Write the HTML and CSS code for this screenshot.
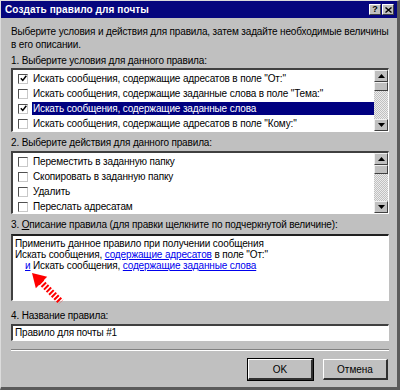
FILE: index.html
```html
<!DOCTYPE html>
<html lang="ru">
<head>
  <meta charset="UTF-8">
  <title>Создать правило для почты</title>
  <link rel="stylesheet" href="styles.css">
</head>
<body>
  <div class="window">
    <div class="titlebar">
      <span class="title">Создать правило для почты</span>
      <div class="title-buttons">
        <span class="tbtn">?</span>
        <span class="tbtn tbtn-close">
          <svg width="7" height="6" viewBox="0 0 7 6"><path d="M0.5 0.5 L6.5 5.5 M6.5 0.5 L0.5 5.5" stroke="#000" stroke-width="1.4"/></svg>
        </span>
      </div>
    </div>

    <div class="content">
      <p class="intro">Выберите условия и действия для правила, затем задайте необходимые величины<br>в его описании.</p>

      <div class="label">1. Выберите условия для данного правила:</div>
      <div class="listbox lb-conditions">
        <ul class="items">
          <li class="item"><span class="check checked"><svg width="7" height="7" viewBox="0 0 7 7"><path d="M0.8 3.2 L2.8 5.4 L6.3 0.8" fill="none" stroke="#000" stroke-width="1.5"/></svg></span><span class="text">Искать сообщения, содержащие адресатов в поле "От:"</span></li>
          <li class="item"><span class="check"></span><span class="text">Искать сообщения, содержащие заданные слова в поле "Тема:"</span></li>
          <li class="item selected"><span class="check checked"><svg width="7" height="7" viewBox="0 0 7 7"><path d="M0.8 3.2 L2.8 5.4 L6.3 0.8" fill="none" stroke="#000" stroke-width="1.5"/></svg></span><span class="text">Искать сообщения, содержащие заданные слова</span></li>
          <li class="item"><span class="check"></span><span class="text">Искать сообщения, содержащие адресатов в поле "Кому:"</span></li>
        </ul>
        <div class="scrollbar">
          <span class="sbtn"><svg width="7" height="4" viewBox="0 0 7 4"><path d="M0 4 L3.5 0 L7 4 Z" fill="#000"/></svg></span>
          <span class="thumb"></span>
          <span class="track"></span>
          <span class="sbtn"><svg width="7" height="4" viewBox="0 0 7 4"><path d="M0 0 L3.5 4 L7 0 Z" fill="#000"/></svg></span>
        </div>
      </div>

      <div class="label">2. Выберите действия для данного правила:</div>
      <div class="listbox lb-actions">
        <ul class="items">
          <li class="item"><span class="check"></span><span class="text">Переместить в заданную папку</span></li>
          <li class="item"><span class="check"></span><span class="text">Скопировать в заданную папку</span></li>
          <li class="item"><span class="check"></span><span class="text">Удалить</span></li>
          <li class="item"><span class="check"></span><span class="text">Переслать адресатам</span></li>
        </ul>
        <div class="scrollbar">
          <span class="sbtn"><svg width="7" height="4" viewBox="0 0 7 4"><path d="M0 4 L3.5 0 L7 4 Z" fill="#000"/></svg></span>
          <span class="thumb"></span>
          <span class="track"></span>
          <span class="sbtn"><svg width="7" height="4" viewBox="0 0 7 4"><path d="M0 0 L3.5 4 L7 0 Z" fill="#000"/></svg></span>
        </div>
      </div>

      <div class="label">3. <u>О</u>писание правила (для правки щелкните по подчеркнутой величине):</div>
      <div class="description">
        <div>Применить данное правило при получении сообщения</div>
        <div>Искать сообщения, <a href="#">содержащие адресатов</a> в поле "От:"</div>
        <div class="indent"><a href="#">и</a> Искать сообщения, <a href="#">содержащие заданные слова</a></div>
        <svg class="pointer" width="60" height="70" viewBox="0 0 60 70">
          <path d="M19 37 L22.8 52.2 L34.2 40.8 Z" fill="#f00"/>
          <path d="M27.5 45.5 L48 66" stroke="#f00" stroke-width="6.5" stroke-dasharray="2 1.6"/>
        </svg>
      </div>

      <div class="label">4. Название правила:</div>
      <div class="textbox">Правило для почты #1</div>

      <div class="separator"></div>

      <div class="actions">
        <button class="btn btn-default">OK</button>
        <button class="btn">Отмена</button>
      </div>
    </div>
  </div>
</body>
</html>
```

FILE: styles.css
```css
* { box-sizing: border-box; margin: 0; padding: 0; }
html, body { width: 100%; height: 100%; }
body {
  font-family: "Liberation Sans", Arial, sans-serif; font-size: 10px; letter-spacing: -0.15px;
  color: #000; background: #c0c0c0;
}

/* окно */
.window {
  width: 400px; height: 390px; background: #c0c0c0;
  border-left: 1px solid #dcdcdc; border-top: 1px solid #dcdcdc;
  border-right: 3px solid #5a5a5a; border-bottom: 3px solid #5a5a5a;
  display: flex; flex-direction: column;
}
.titlebar {
  height: 17px; background: #06067e; color: #fff;
  display: flex; align-items: center; justify-content: space-between;
  padding: 0 3px 0 4px; flex-shrink: 0;
}
.title { font-weight: bold; font-size: 10px; letter-spacing: 0.1px; }
.title-buttons { display: flex; gap: 1px; }
.tbtn {
  width: 12px; height: 11px; background: #c0c0c0; color: #000;
  border-top: 1px solid #fff; border-left: 1px solid #fff;
  border-right: 1px solid #404040; border-bottom: 1px solid #404040;
  display: flex; align-items: center; justify-content: center;
  font-weight: bold; font-size: 9px; line-height: 1;
}

/* содержимое */
.content { flex: 1; padding: 7px 8px 0 10px; display: flex; flex-direction: column; }
.intro { line-height: 13px; margin-bottom: 3px; white-space: nowrap; }
.label { line-height: 13px; margin-bottom: 1px; white-space: nowrap; }
.label u { text-decoration: underline; }

/* список */
.listbox {
  display: flex; background: #fff; overflow: hidden; flex-shrink: 0;
  border-top: 2px solid #404040; border-left: 2px solid #404040;
  border-right: 1px solid #fff; border-bottom: 1px solid #fff;
  margin-bottom: 4px;
}
.lb-conditions { height: 64px; }
.lb-actions { height: 63px; margin-top: 1px; }
.items { list-style: none; flex: 1; padding-top: 1px; }
.item { height: 15px; display: flex; align-items: center; padding-left: 5px; white-space: nowrap; }
.check {
  width: 10px; height: 10px; background: #fff; margin-right: 4px; flex-shrink: 0;
  border-top: 1px solid #505050; border-left: 1px solid #505050;
  border-right: 1px solid #c8c8c8; border-bottom: 1px solid #c8c8c8;
  display: flex; align-items: center; justify-content: center;
}
.text { padding: 0 1px; line-height: 13px; }
.selected .text { flex: 1; background: #000080; color: #fff; }

.scrollbar { width: 14px; display: flex; flex-direction: column; background: #e4e4e4; flex-shrink: 0; }
.sbtn, .thumb {
  background: #c0c0c0; display: flex; align-items: center; justify-content: center;
  border-top: 1px solid #f0f0f0; border-left: 1px solid #f0f0f0;
  border-right: 1px solid #404040; border-bottom: 1px solid #404040;
}
.sbtn { height: 12px; }
.thumb { height: 9px; }
.track {
  flex: 1;
  background: repeating-conic-gradient(#c0c0c0 0 25%, #ececec 0 50%) 0 0 / 2px 2px;
}

/* описание */
.description {
  position: relative; height: 67px; background: #fff; flex-shrink: 0;
  border-top: 2px solid #202020; border-left: 2px solid #404040;
  border-right: 1px solid #fff; border-bottom: 1px solid #fff;
  padding: 2px 2px; line-height: 11px; margin-top: 2px; margin-bottom: 8px;
}
.description a { color: #0000ee; text-decoration: underline; }
.indent { padding-left: 10px; }
.pointer { position: absolute; left: 0; top: 0; }

/* название */
.textbox {
  height: 17px; background: #fff; line-height: 14px; padding-left: 2px; flex-shrink: 0;
  border-top: 2px solid #404040; border-left: 2px solid #404040;
  border-right: 1px solid #fff; border-bottom: 1px solid #fff;
  margin-top: 1px;
}
.separator { height: 2px; border-top: 1px solid #808080; border-bottom: 1px solid #fff; margin: 8px 0 8px; }

.actions { display: flex; justify-content: flex-end; gap: 10px; padding-right: 1px; }
.btn {
  width: 65px; height: 21px; background: #c0c0c0;
  font-family: "Liberation Sans", Arial, sans-serif; font-size: 10px; color: #000;
  border-top: 1px solid #fff; border-left: 1px solid #fff;
  border-right: 2px solid #303030; border-bottom: 2px solid #303030;
}
.btn-default { outline: 1px solid #000; }
```
